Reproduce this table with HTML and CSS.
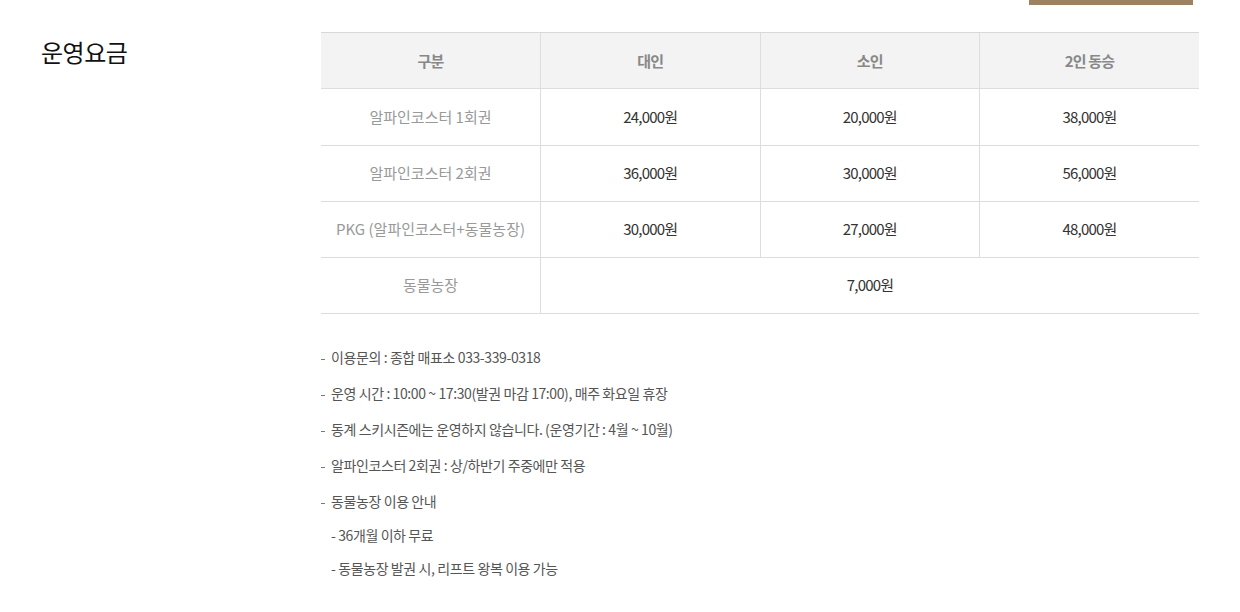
FILE: index.html
```html
<!DOCTYPE html>
<html>
  <head>
    <title>운영요금</title>
    <link rel="stylesheet" href="styles.css">
  </head>
  <body>
    <div class="top-bar"><span class="top-btn"></span></div>
    <section class="fee">
      <h2 class="fee-title">운영요금</h2>
      <div class="fee-body">
        <table class="fee-table">
          <thead>
            <tr>
              <th>구분</th>
              <th>대인</th>
              <th>소인</th>
              <th>2인 동승</th>
            </tr>
          </thead>
          <tbody>
            <tr>
              <td class="kind">알파인코스터 1회권</td>
              <td>24,000원</td>
              <td>20,000원</td>
              <td>38,000원</td>
            </tr>
            <tr>
              <td class="kind">알파인코스터 2회권</td>
              <td>36,000원</td>
              <td>30,000원</td>
              <td>56,000원</td>
            </tr>
            <tr>
              <td class="kind">PKG (알파인코스터+동물농장)</td>
              <td>30,000원</td>
              <td>27,000원</td>
              <td>48,000원</td>
            </tr>
            <tr>
              <td class="kind">동물농장</td>
              <td colspan="3">7,000원</td>
            </tr>
          </tbody>
        </table>

        <ul class="notes">
          <li>이용문의 : 종합 매표소 033-339-0318</li>
          <li>운영 시간 : 10:00 ~ 17:30(발권 마감 17:00), 매주 화요일 휴장</li>
          <li>동계 스키시즌에는 운영하지 않습니다. (운영기간 : 4월 ~ 10월)</li>
          <li>알파인코스터 2회권 : 상/하반기 주중에만 적용</li>
          <li>동물농장 이용 안내
            <ul class="sub-notes">
              <li>- 36개월 이하 무료</li>
              <li>- 동물농장 발권 시, 리프트 왕복 이용 가능</li>
            </ul>
          </li>
        </ul>
      </div>
    </section>
  </body>
</html>
```

FILE: styles.css
```css
* { box-sizing: border-box; }
body {
  margin: 0;
  background: white;
  font-family: "Noto Sans CJK KR", "Noto Sans", sans-serif;
  color: #333;
}
.top-bar {
  display: flex;
  justify-content: flex-end;
  padding-right: 47px;
  height: 5px;
}
.top-btn {
  width: 164px;
  height: 5px;
  background: #9c8260;
}
.fee {
  display: flex;
  padding-top: 27px;
}
.fee-title {
  width: 321px;
  margin: 0;
  padding-left: 41px;
  padding-top: 4px;
  font-size: 24px;
  font-weight: 400;
  color: #111;
  line-height: 32px;
  letter-spacing: -0.5px;
}
.fee-body {
  width: 878px;
}
.fee-table {
  width: 100%;
  border-collapse: collapse;
  table-layout: fixed;
  font-size: 15px;
  letter-spacing: -0.8px;
}
.fee-table th,
.fee-table td {
  height: 56px;
  padding: 0 0 2px;
  text-align: center;
  border-top: 1px solid #ddd;
  border-bottom: 1px solid #ddd;
  border-left: 1px solid #ddd;
}
.fee-table td {
  color: #333;
}
.fee-table tbody tr:first-child td {
  height: 57px;
}
.fee-table th:first-child,
.fee-table td:first-child {
  border-left: 0;
}
.fee-table th {
  padding-bottom: 1px;
  background: #f2f3f2;
  color: #888;
  font-weight: 700;
  border-top-color: #d8d8d8;
}
.fee-table td.kind {
  color: #999;
  letter-spacing: 0;
}
.notes {
  list-style: none;
  margin: 25px 0 0;
  padding: 0;
  font-size: 14px;
  color: #555;
  letter-spacing: -0.4px;
}
.notes > li {
  line-height: 36px;
  padding-left: 10px;
  position: relative;
}
.notes > li::before {
  content: "";
  position: absolute;
  left: 0;
  top: 20px;
  width: 4px;
  height: 1px;
  background: #777;
}
.sub-notes {
  list-style: none;
  margin: 0;
  padding: 0;
}
.sub-notes li {
  line-height: 33px;
}
```
